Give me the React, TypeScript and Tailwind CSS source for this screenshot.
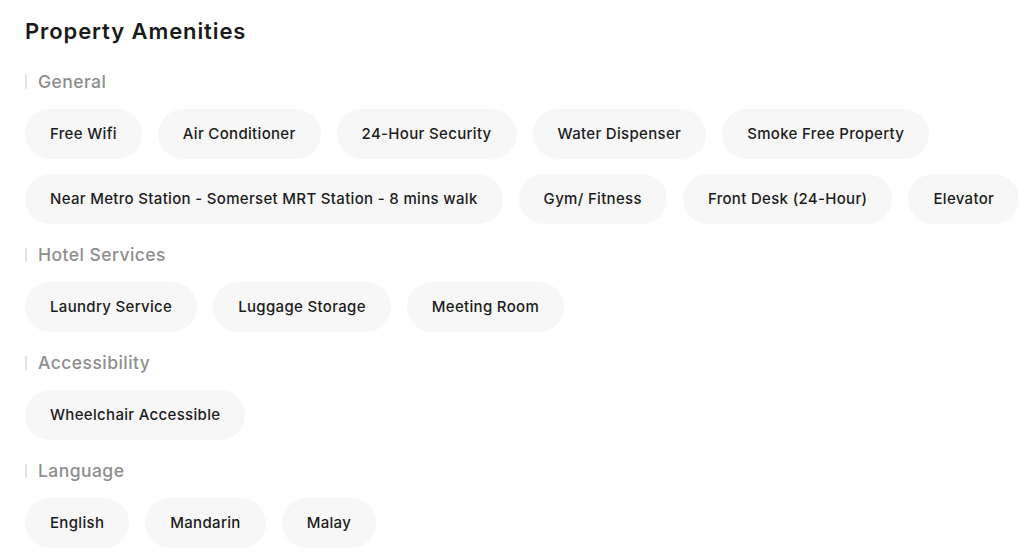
import React from "react";

type Section = { title: string; items: string[] };

const sections: Section[] = [
  {
    title: "General",
    items: [
      "Free Wifi",
      "Air Conditioner",
      "24-Hour Security",
      "Water Dispenser",
      "Smoke Free Property",
      "Near Metro Station - Somerset MRT Station - 8 mins walk",
      "Gym/ Fitness",
      "Front Desk (24-Hour)",
      "Elevator",
    ],
  },
  {
    title: "Hotel Services",
    items: ["Laundry Service", "Luggage Storage", "Meeting Room"],
  },
  { title: "Accessibility", items: ["Wheelchair Accessible"] },
  { title: "Language", items: ["English", "Mandarin", "Malay"] },
];

function Pill({ label }: { label: string }) {
  return (
    <span className="flex h-[50px] items-center rounded-full bg-[#f7f7f7] px-[25px] text-[15px] font-medium tracking-[0.32px] text-[#1c1c1c] whitespace-nowrap">
      {label}
    </span>
  );
}

export default function App() {
  return (
    <div
      className="min-h-[553px] w-[1024px] bg-white pt-[15px] pl-[25px]"
      style={{ fontFamily: "Inter, 'Noto Sans', sans-serif" }}
    >
      <h2 className="text-[22px] leading-[32px] font-semibold text-[#1a1a1a] tracking-[0.9px]">
        Property Amenities
      </h2>
      <div className="mt-[23px] flex flex-col gap-[19px]">
        {sections.map((s) => (
          <section key={s.title}>
            <div className="flex h-[24px] items-center gap-[11px]">
              <span className="h-[14px] w-[2px] bg-[#e2e2e2]" />
              <span className="text-[17.5px] font-medium tracking-[0.45px] text-[#8e8e8e]">
                {s.title}
              </span>
            </div>
            <div className="mt-[15px] flex flex-wrap gap-x-4 gap-y-[15px]">
              {s.items.map((it) => (
                <Pill key={it} label={it} />
              ))}
            </div>
          </section>
        ))}
      </div>
    </div>
  );
}
